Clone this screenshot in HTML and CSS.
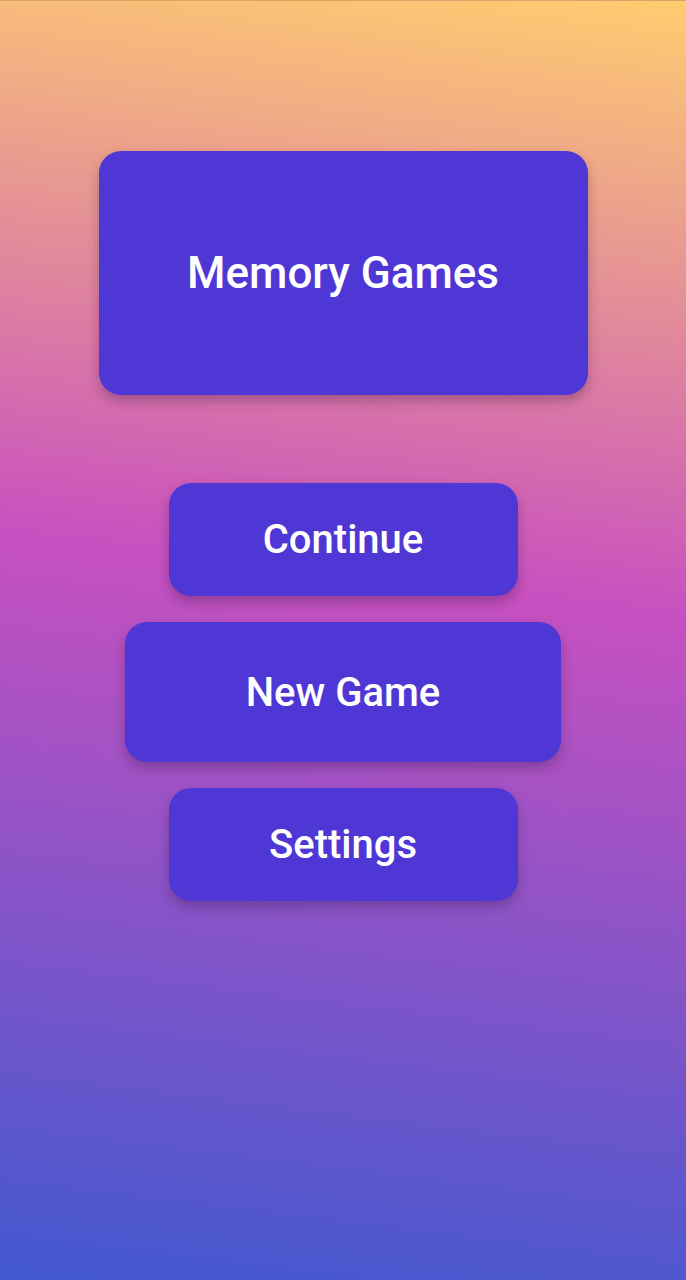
FILE: index.html
```html
<!DOCTYPE html>
<html>
<head>
<meta charset="utf-8">
<link rel="stylesheet" href="styles.css">
</head>
<body>
<main class="screen">
  <div class="title-card"><h1 class="title">Memory Games</h1></div>
  <div class="menu">
    <button class="btn btn-narrow">Continue</button>
    <button class="btn btn-wide">New Game</button>
    <button class="btn btn-narrow">Settings</button>
  </div>
</main>
</body>
</html>
```
FILE: styles.css
```css
html, body {
  margin: 0;
  padding: 0;
}
body {
  width: 686px;
  height: 1280px;
  overflow: hidden;
  font-family: Roboto, "Noto Sans", sans-serif;
}
.screen {
  box-sizing: border-box;
  height: 1280px;
  border-top: 1px solid #d8a468;
  background: linear-gradient(7deg, #4158d0 0%, #c850c0 55%, #ffcc70 100%);
  display: flex;
  flex-direction: column;
  align-items: center;
  padding-top: 150px;
}
.title-card {
  width: 489px;
  height: 244px;
  border-radius: 22px;
  background: #4f37d5;
  box-shadow: 0 6px 12px rgba(40, 20, 60, 0.3);
  display: flex;
  align-items: center;
  justify-content: center;
}
.title {
  margin: 0;
  color: #fff;
  font-weight: 500;
  font-size: 44px;
}
.menu {
  margin-top: 88px;
  display: flex;
  flex-direction: column;
  align-items: center;
  gap: 26px;
}
.btn {
  border: none;
  border-radius: 22px;
  background: #4f37d5;
  color: #fff;
  font-family: Roboto, "Noto Sans", sans-serif;
  font-weight: 500;
  font-size: 40px;
  box-shadow: 0 6px 12px rgba(40, 20, 60, 0.3);
  padding: 0;
}
.btn-narrow {
  width: 349px;
  height: 113px;
}
.btn-wide {
  width: 436px;
  height: 140px;
}
```
